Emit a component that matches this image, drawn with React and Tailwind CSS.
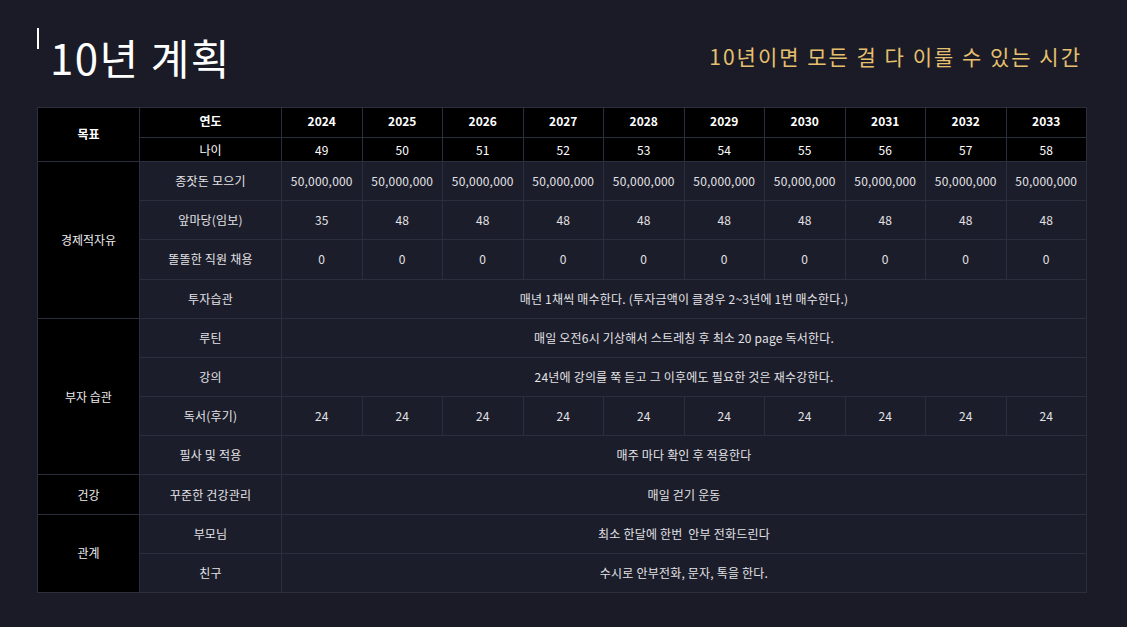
import React from 'react';

const years = [2024, 2025, 2026, 2027, 2028, 2029, 2030, 2031, 2032, 2033];
const ages = [49, 50, 51, 52, 53, 54, 55, 56, 57, 58];

const Cell = ({ className = '', children }) => (
  <div className={`flex items-center justify-center text-center ${className}`}>{children}</div>
);

const Head = ({ className = '', children }) => (
  <Cell className={`bg-black text-white ${className}`}>{children}</Cell>
);

const Body = ({ className = '', children }) => (
  <Cell className={`bg-[#1c1d2a] text-[#e2e2e6] tracking-[0.2px] ${className}`}>{children}</Cell>
);

const Group = ({ className = '', children }) => (
  <Cell className={`bg-black text-[#ececec] col-start-1 ${className}`}>{children}</Cell>
);

const Repeat = ({ value }) =>
  years.map((y) => <Body key={y}>{value}</Body>);

const Span = ({ children }) => <Body className="col-span-10">{children}</Body>;

export default function App() {
  return (
    <div
      className="w-full h-[627px] bg-[#1a1b26] px-[37px] overflow-hidden"
      style={{ fontFamily: '"Noto Sans CJK KR", "Noto Sans", sans-serif' }}
    >
      {/* Title */}
      <div className="w-[1050px] h-[107px] flex items-start justify-between">
        <div className="flex items-start pt-[28px]">
          <div className="w-[2px] h-[21px] bg-white" />
          <h1 className="ml-[11px] mt-[4px] text-[42px] leading-[50px] text-white font-normal tracking-[1.5px]">
            10년 계획
          </h1>
        </div>
        <div className="mt-[42px] mr-[5px] text-[21px] leading-[28px] tracking-[2px] text-[#e6c06e]">
          10년이면 모든 걸 다 이룰 수 있는 시간
        </div>
      </div>

      {/* Table */}
      <div className="w-[1050px] grid grid-cols-[101px_141px_repeat(10,1fr)] grid-rows-[29px_23px_repeat(11,1fr)] h-[486px] gap-px p-px bg-[#2b2e3c] text-[12px] leading-none">
        <Head className="row-span-2 font-semibold pb-[2px]">목표</Head>
        <Head className="font-semibold pb-[3px]">연도</Head>
        {years.map((y) => (
          <Head key={y} className="font-bold pb-[3px]">{y}</Head>
        ))}
        <Head>나이</Head>
        {ages.map((a) => (
          <Head key={a}>{a}</Head>
        ))}

        <Group className="row-span-4">경제적자유</Group>
        <Body>종잣돈 모으기</Body>
        <Repeat value="50,000,000" />
        <Body>앞마당(임보)</Body>
        {years.map((y, i) => (
          <Body key={y}>{i === 0 ? 35 : 48}</Body>
        ))}
        <Body>똘똘한 직원 채용</Body>
        <Repeat value="0" />
        <Body>투자습관</Body>
        <Span>매년 1채씩 매수한다. (투자금액이 클경우 2~3년에 1번 매수한다.)</Span>

        <Group className="row-span-4">부자 습관</Group>
        <Body>루틴</Body>
        <Span>매일 오전6시 기상해서 스트레칭 후 최소 20 page 독서한다.</Span>
        <Body>강의</Body>
        <Span>24년에 강의를 쭉 듣고 그 이후에도 필요한 것은 재수강한다.</Span>
        <Body>독서(후기)</Body>
        <Repeat value="24" />
        <Body>필사 및 적용</Body>
        <Span>매주 마다 확인 후 적용한다</Span>

        <Group>건강</Group>
        <Body>꾸준한 건강관리</Body>
        <Span>매일 걷기 운동</Span>

        <Group className="row-span-2">관계</Group>
        <Body>부모님</Body>
        <Span>최소 한달에 한번&nbsp; 안부 전화드린다</Span>
        <Body>친구</Body>
        <Span>수시로 안부전화, 문자, 톡을 한다.</Span>
      </div>
    </div>
  );
}
